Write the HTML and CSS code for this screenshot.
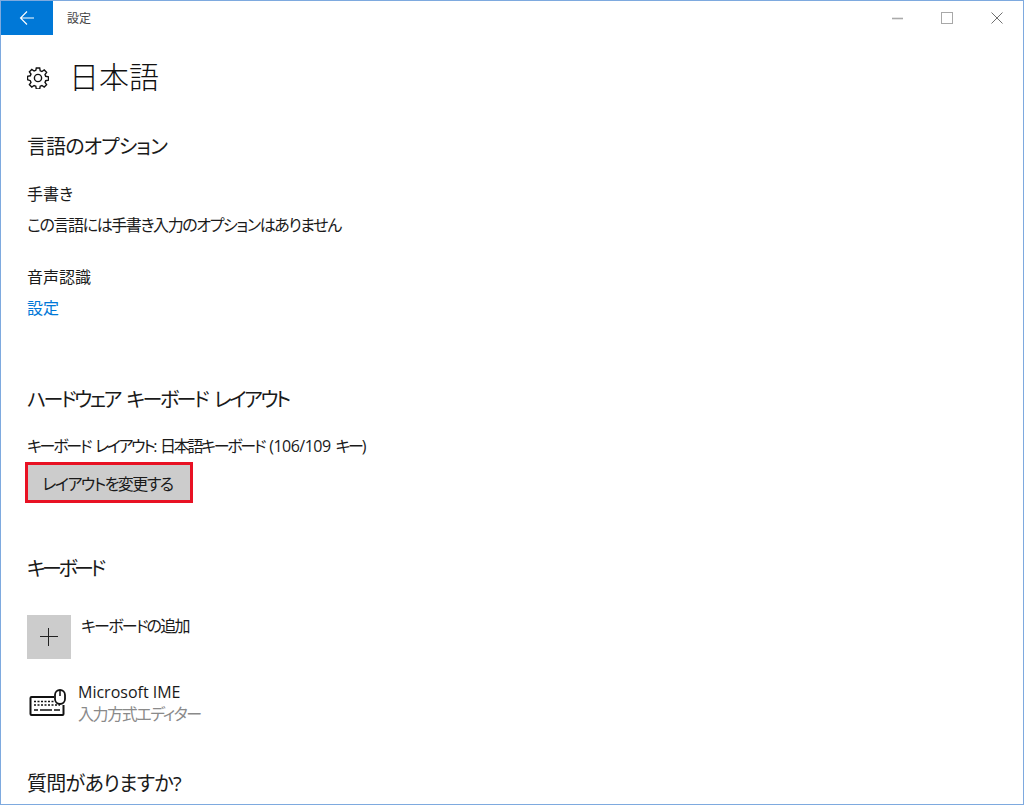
FILE: index.html
```html
<!DOCTYPE html>
<html lang="ja">
<head>
    <meta charset="UTF-8">
    <title>設定</title>
    <link rel="stylesheet" href="styles.css">
</head>
<body>
    <div class="window">
        <div class="titlebar">
            <div class="back-button">
                <svg width="16" height="16" viewBox="0 0 16 16"><path d="M15 8H1.5M8 1.5 1.5 8 8 14.5" fill="none" stroke="#fff" stroke-width="1.1"/></svg>
            </div>
            <div class="app-name">設定</div>
            <div class="window-controls">
                <svg width="12" height="12" viewBox="0 0 12 12"><path d="M1 6.5H12" stroke="#aaa" stroke-width="1.6"/></svg>
                <svg width="12" height="12" viewBox="0 0 12 12"><rect x="0.5" y="0.5" width="11" height="11" fill="none" stroke="#a8a8a8" stroke-width="1"/></svg>
                <svg width="12" height="12" viewBox="0 0 12 12"><path d="M0.5 0.5 11.5 11.5M11.5 0.5 0.5 11.5" stroke="#707070" stroke-width="1"/></svg>
            </div>
        </div>

        <div class="content">
            <div class="page-title">
                <svg class="gear" width="22" height="22" viewBox="0 0 22 22"><path d="M9.3 1h3.4l.5 2.8 1.7.7 2.3-1.6 2.4 2.4-1.6 2.3.7 1.7 2.8.5v3.4l-2.8.5-.7 1.7 1.6 2.3-2.4 2.4-2.3-1.6-1.7.7-.5 2.8H9.3l-.5-2.8-1.7-.7-2.3 1.6-2.4-2.4 1.6-2.3-.7-1.7L.5 12.7V9.3l2.8-.5.7-1.7-1.6-2.3 2.4-2.4 2.3 1.6 1.7-.7z" fill="none" stroke="#111" stroke-width="1.4"/><circle cx="11" cy="11" r="3.6" fill="none" stroke="#111" stroke-width="1.4"/></svg>
                <h1>日本語</h1>
            </div>

            <section class="options">
                <h2 class="options-heading">言語のオプション</h2>
                <p class="label handwriting">手書き</p>
                <p class="label tight">この言語には手書き入力のオプションはありません</p>
                <p class="label speech">音声認識</p>
                <a class="link" href="#">設定</a>
            </section>

            <section class="hardware">
                <h2 class="kana-heading">ハードウェア キーボード レイアウト</h2>
                <p class="label layout-name">キーボード レイアウト: 日本語キーボード <span class="latin">(106/109</span> キー)</p>
                <button class="change-button">レイアウトを変更する</button>
            </section>

            <section class="keyboards">
                <h2 class="short-heading">キーボード</h2>
                <div class="add-row">
                    <div class="add-tile">
                        <svg width="18" height="18" viewBox="0 0 18 18"><path d="M8.5 0V18M0 8.5H18" stroke="#222" stroke-width="1"/></svg>
                    </div>
                    <span class="label add-label">キーボードの追加</span>
                </div>
                <div class="ime-row">
                    <svg width="38" height="28" viewBox="0 0 38 28">
                        <path d="M25 8H2.5a1 1 0 0 0-1 1v16a1 1 0 0 0 1 1h31a1 1 0 0 0 1-1V16" fill="none" stroke="#111" stroke-width="2"/>
                        <rect x="26" y="1" width="10" height="14" rx="5" fill="#fff" stroke="#111" stroke-width="1.8"/>
                        <path d="M31 2V7" stroke="#111" stroke-width="1.5"/>
                        <path d="M5 12.5H25M5 16H31" stroke="#111" stroke-width="1.5" stroke-dasharray="2 1.5"/>
                        <path d="M5 21H9M11 21H23M25 21H31" stroke="#111" stroke-width="1.5"/>
                    </svg>
                    <div class="ime-text">
                        <div class="label">Microsoft IME</div>
                        <div class="label tight muted">入力方式エディター</div>
                    </div>
                </div>
            </section>

            <h2 class="question">質問がありますか?</h2>
        </div>
    </div>
</body>
</html>
```

FILE: styles.css
```css
* {
    box-sizing: border-box;
    margin: 0;
    padding: 0;
}

html, body {
    height: 805px;
    overflow: hidden;
}

body {
    background-color: #fff;
    color: #1a1a1a;
    font-family: "Open Sans", "Noto Sans CJK JP", sans-serif;
    font-feature-settings: "palt";
}

.window {
    height: 805px;
    border: 1px solid #7eaadf;
    overflow: hidden;
}

/* Title bar */
.titlebar {
    display: flex;
    align-items: center;
    height: 34px;
}

.back-button {
    display: flex;
    align-items: center;
    justify-content: center;
    width: 52px;
    height: 34px;
    background-color: #0078d7;
}

.app-name {
    margin-left: 14px;
    margin-bottom: 1px;
    font-size: 12px;
    color: #444;
}

.window-controls {
    display: flex;
    align-items: center;
    gap: 38px;
    margin-left: auto;
    margin-right: 20px;
}

/* Page content */
.content {
    padding-left: 26px;
}

.page-title {
    display: flex;
    align-items: center;
    gap: 20px;
    height: 44px;
    margin-top: 20px;
}

.gear {
    margin-top: 2px;
}

h1 {
    font-size: 30px;
    font-weight: 300;
    line-height: 44px;
    color: #111;
}

h2 {
    font-size: 20px;
    font-weight: 400;
    line-height: 28px;
    letter-spacing: -0.7px;
    color: #1a1a1a;
}

.options-heading {
    letter-spacing: -0.9px;
}

.kana-heading {
    letter-spacing: -2.5px;
    word-spacing: 4px;
}

.short-heading {
    letter-spacing: -3.5px;
}

.label {
    font-size: 16px;
    line-height: 22px;
}

.tight {
    letter-spacing: -1.4px;
}

.add-label {
    letter-spacing: -1.8px;
}

.muted {
    color: #8a8a8a;
}

.link {
    display: block;
    font-size: 16px;
    line-height: 22px;
    margin-top: 9px;
    color: #0078d7;
    text-decoration: none;
}

.options {
    margin-top: 34px;
}

.handwriting {
    margin-top: 22px;
    margin-bottom: 9px;
}

.speech {
    margin-top: 30px;
}

.hardware {
    margin-top: 67px;
}

.layout-name {
    margin-top: 21px;
    letter-spacing: -2.3px;
    word-spacing: 3px;
}

.latin {
    letter-spacing: -0.5px;
}

.change-button {
    display: block;
    margin-top: 5px;
    margin-left: -2px;
    width: 168px;
    height: 41px;
    padding-right: 3px;
    border: 3px solid #e81123;
    background-color: #ccc;
    color: #1a1a1a;
    font-family: inherit;
    font-feature-settings: inherit;
    font-size: 16px;
    letter-spacing: -1.5px;
}

.keyboards {
    margin-top: 52px;
}

.add-row {
    display: flex;
    align-items: flex-start;
    gap: 10px;
    margin-top: 32px;
}

.add-tile {
    display: flex;
    align-items: center;
    justify-content: center;
    width: 44px;
    height: 44px;
    background-color: #ccc;
}

.ime-row {
    display: flex;
    align-items: center;
    gap: 11px;
    margin-top: 22px;
    margin-left: 2px;
}

.question {
    margin-top: 45px;
}
```
